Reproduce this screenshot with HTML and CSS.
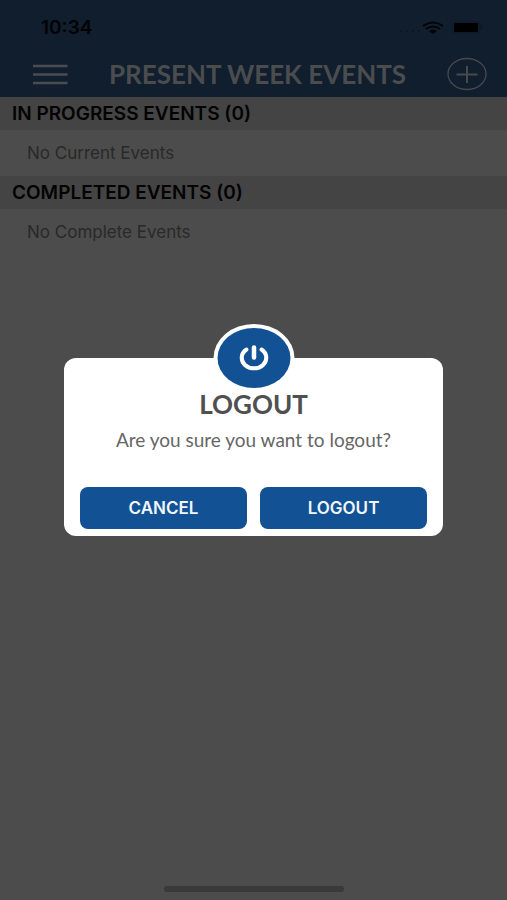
FILE: index.html
```html
<!DOCTYPE html>
<html lang="en">
<head>
<meta charset="utf-8">
<meta name="viewport" content="width=device-width, initial-scale=1">
<title>Present Week Events</title>
<link rel="stylesheet" href="styles.css">
</head>
<body>
<div class="app">
  <header class="header">
    <div class="status">
      <span class="clock">10:34</span>
      <svg class="status-icons" width="92" height="16" viewBox="0 0 92 16" aria-hidden="true">
        <g fill="#0b1622"><circle cx="6" cy="11" r="1"/><circle cx="12" cy="11" r="1"/><circle cx="18" cy="11" r="1"/><circle cx="24" cy="11" r="1"/></g>
        <g fill="none" stroke="#020507" stroke-width="2"><path d="M28 6Q38-1 48 6"/><path d="M31 9Q38 4 45 9"/></g>
        <path d="M34 11Q38 8 42 11L38 14Z" fill="#020507"/>
        <rect x="57" y="2" width="28" height="11" rx="3" fill="none" stroke="#0c1926"/>
        <rect x="59" y="3" width="24" height="9" rx="1" fill="#000"/>
        <path d="M86 5Q89 7 86 10Z" fill="#0a1622"/>
      </svg>
    </div>
    <div class="bar">
      <button class="icon-button" type="button" aria-label="Menu">
        <svg width="36" height="22" viewBox="0 0 36 22"><path d="M1 3H35.500M1 11.500H35.500M1 20H35.500" stroke="#4a4c51" stroke-width="2.500"/></svg>
      </button>
      <h1 class="title">PRESENT WEEK EVENTS</h1>
      <button class="icon-button" type="button" aria-label="Add event">
        <svg width="40" height="34" viewBox="0 0 40 34" fill="none" stroke="#47494d"><ellipse cx="20" cy="17" rx="19" ry="15.500" stroke-width="1.300"/><path d="M9.500 17.500H30.500M20 9V26" stroke-width="2"/></svg>
      </button>
    </div>
  </header>
  <main class="content">
    <section>
      <h2 class="section-title">IN PROGRESS EVENTS (0)</h2>
      <p class="empty">No Current Events</p>
    </section>
    <section>
      <h2 class="section-title">COMPLETED EVENTS (0)</h2>
      <p class="empty">No Complete Events</p>
    </section>
  </main>
  <div class="home-indicator"></div>
</div>
<div class="overlay">
  <div class="dialog" role="alertdialog" aria-modal="true" aria-labelledby="dialog-title" aria-describedby="dialog-text">
    <svg class="badge" width="82" height="68" viewBox="0 0 82 68" aria-hidden="true">
      <ellipse cx="41" cy="34" rx="40.500" ry="34" fill="#fff"/>
      <ellipse cx="41" cy="34" rx="36.500" ry="30" fill="#125294"/>
      <g fill="none" stroke="#fff" stroke-linecap="round"><path d="M33.500 25.500A12.300 10.500 0 1 0 48.500 25.500" stroke-width="4"/><path d="M41 23.500V33.500" stroke-width="4.500"/></g>
    </svg>
    <h2 class="dialog-title" id="dialog-title">LOGOUT</h2>
    <p class="dialog-text" id="dialog-text">Are you sure you want to logout?</p>
    <div class="actions">
      <button class="action" type="button">CANCEL</button>
      <button class="action" type="button">LOGOUT</button>
    </div>
  </div>
</div>
</body>
</html>
```
FILE: styles.css
```css
* {
  box-sizing: border-box;
}

body,
h1,
h2,
p {
  margin: 0;
}

body {
  font-family: Inter, "Liberation Sans", sans-serif;
  background: #4c4c4c;
  color: #030303;
}

.app {
  display: flex;
  flex-direction: column;
  min-height: 100vh;
}

.header {
  background: #101e2e;
}

.status {
  display: flex;
  align-items: center;
  justify-content: space-between;
  height: 51px;
  padding: 4px 20px 0 41px;
}

.clock {
  font-size: 19px;
  font-weight: 600;
}

.bar {
  display: flex;
  align-items: center;
  justify-content: space-between;
  height: 46px;
  padding: 0 20px 0 32px;
}

.icon-button {
  display: flex;
  padding: 0;
  border: 0;
  background: none;
}

.title {
  font-family: Lato, sans-serif;
  font-size: 26px;
  font-weight: 700;
  line-height: 32px;
  white-space: nowrap;
  color: #4b4c4e;
}

.content {
  flex: 1;
}

.section-title {
  padding: 0 12px;
  font-size: 19px;
  font-weight: 600;
  line-height: 33px;
  background: #444;
}

.empty {
  padding: 0 27px;
  font-size: 17px;
  line-height: 46px;
  color: #292929;
}

.home-indicator {
  width: 180px;
  height: 6px;
  margin: 0 auto 8px;
  border-radius: 3px;
  background: #3a3a3a;
}

.overlay {
  position: fixed;
  inset: 0;
  display: flex;
  align-items: center;
  justify-content: center;
  padding: 0 64px 6px;
}

.dialog {
  position: relative;
  width: 100%;
  max-width: 480px;
  padding: 32px 16px 7px;
  border-radius: 12px;
  background: #fff;
  text-align: center;
}

.badge {
  position: absolute;
  top: -34px;
  left: calc(50% - 41px);
}

.dialog-title {
  font-family: Lato, sans-serif;
  font-size: 26px;
  font-weight: 700;
  line-height: 28px;
  color: #505050;
}

.dialog-text {
  padding: 8px 0 33px;
  font-family: Lato, sans-serif;
  font-size: 19px;
  line-height: 28px;
  color: #666;
}

.actions {
  display: flex;
  gap: 13px;
}

.action {
  flex: 1;
  height: 42px;
  padding: 0;
  border: 0;
  border-radius: 8px;
  background: #125294;
  color: #f1f6fb;
  font-family: inherit;
  font-size: 17px;
  font-weight: 600;
}
```
